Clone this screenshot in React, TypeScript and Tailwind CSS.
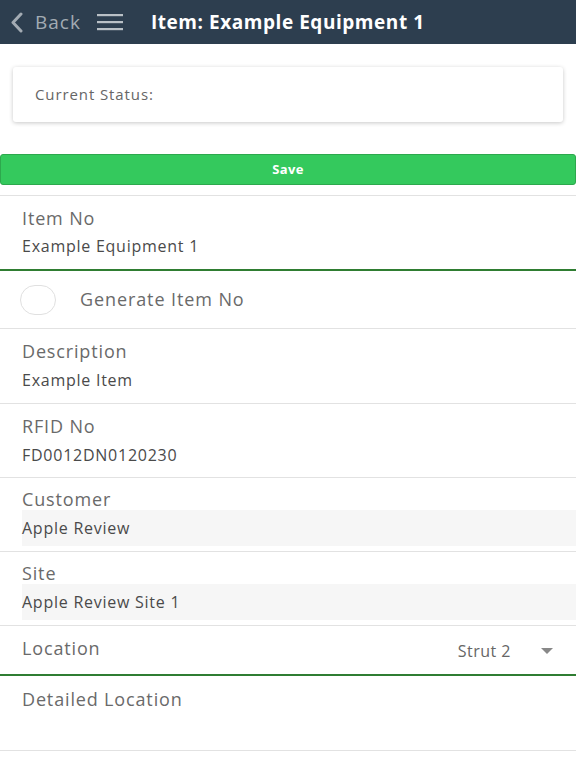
import React from 'react';

const font = { fontFamily: '"Open Sans", "Noto Sans", sans-serif' };

function FieldRow({ label, value, shaded, tall }: { label: string; value: string; shaded?: boolean; tall?: boolean }) {
  if (shaded) {
    return (
      <div className="border-b border-[#e2e2e2] pt-[10px] pb-[5px]">
        <div className="px-[22px] text-[18px] leading-[22px] tracking-[0.85px] text-[#6a6a6a]">{label}</div>
        <div className="ml-[22px] h-[36px] bg-[#f6f6f6] flex items-center text-[16px] tracking-[0.75px] text-[#4a4a4a]">{value}</div>
      </div>
    );
  }
  return (
    <div className={tall ? 'border-b border-[#e2e2e2] px-[22px] pt-[11px] pb-[13px]' : 'border-b border-[#e2e2e2] px-[22px] pt-[11px] pb-[12px]'}>
      <div className="text-[18px] leading-[22px] tracking-[0.85px] text-[#6a6a6a]">{label}</div>
      <div className="mt-[8px] text-[16px] leading-[20px] tracking-[0.75px] text-[#4a4a4a]">{value}</div>
    </div>
  );
}

export default function App() {
  return (
    <div className="w-[576px] h-[768px] bg-white overflow-hidden" style={font}>
      {/* top bar */}
      <div className="h-[44px] bg-[#2d3e4f] flex items-center">
        <svg className="ml-[10px]" width="13" height="21" viewBox="0 0 13 21">
          <polyline points="11,2 3,10.5 11,19" fill="none" stroke="#a3abb3" strokeWidth="3" strokeLinecap="round" strokeLinejoin="round" />
        </svg>
        <span className="ml-[12px] text-[19px] tracking-[1px] text-[#a3abb3]">Back</span>
        <svg className="ml-[16px]" width="26" height="18" viewBox="0 0 26 18">
          <rect x="0" y="1" width="26" height="2.2" fill="#b9c0c6" />
          <rect x="0" y="8" width="26" height="2.2" fill="#b9c0c6" />
          <rect x="0" y="15" width="26" height="2.2" fill="#b9c0c6" />
        </svg>
        <span className="ml-[28px] text-[19px] tracking-[0.55px] font-bold text-white">Item: Example Equipment 1</span>
      </div>

      <div className="px-[13px] pt-[23px]">
        <div className="h-[55px] rounded-[3px] bg-white shadow-[0_1px_4px_rgba(0,0,0,0.22)] flex items-center px-[22px] text-[15px] tracking-[0.9px] text-[#666]">
          Current Status:
        </div>
      </div>

      <div className="mt-[32px] h-[31px] bg-[#34c95d] border border-[#2da84d] rounded-[3px] flex items-center justify-center text-[13px] tracking-[0.4px] font-bold text-white">
        Save
      </div>

      <div className="mt-[10px] border-t border-[#e2e2e2]">
        <div className="border-b-2 border-[#2f7d32] px-[22px] pt-[11px] pb-[13px]">
          <div className="text-[18px] leading-[22px] tracking-[0.85px] text-[#6a6a6a]">Item No</div>
          <div className="mt-[7px] text-[16px] leading-[20px] tracking-[0.75px] text-[#4a4a4a]">Example Equipment 1</div>
        </div>

        <div className="h-[58px] border-b border-[#e2e2e2] flex items-center">
          <div className="ml-[20px] w-[36px] h-[30px] rounded-full border border-[#e0e0e0]" />
          <span className="ml-[24px] text-[18px] tracking-[0.9px] text-[#6a6a6a]">Generate Item No</span>
        </div>

        <FieldRow label="Description" value="Example Item" tall />
        <FieldRow label="RFID No" value="FD0012DN0120230" />
        <FieldRow label="Customer" value="Apple Review" shaded />
        <FieldRow label="Site" value="Apple Review Site 1" shaded />

        <div className="h-[50px] border-b-2 border-[#2f7d32] px-[22px] pt-[11px] flex items-start">
          <span className="flex-1 text-[18px] leading-[22px] tracking-[0.85px] text-[#6a6a6a]">Location</span>
          <span className="pt-[3px] text-[16px] leading-[22px] tracking-[0.5px] text-[#666]">Strut 2</span>
          <svg className="ml-[30px] mr-[1px] mt-[11px]" width="12" height="6" viewBox="0 0 12 6">
            <polygon points="0,0 12,0 6,6" fill="#888" />
          </svg>
        </div>

        <div className="h-[75px] border-b border-[#e2e2e2] px-[22px] pt-[12px]">
          <div className="text-[18px] leading-[22px] tracking-[0.85px] text-[#6a6a6a]">Detailed Location</div>
        </div>
      </div>
    </div>
  );
}
